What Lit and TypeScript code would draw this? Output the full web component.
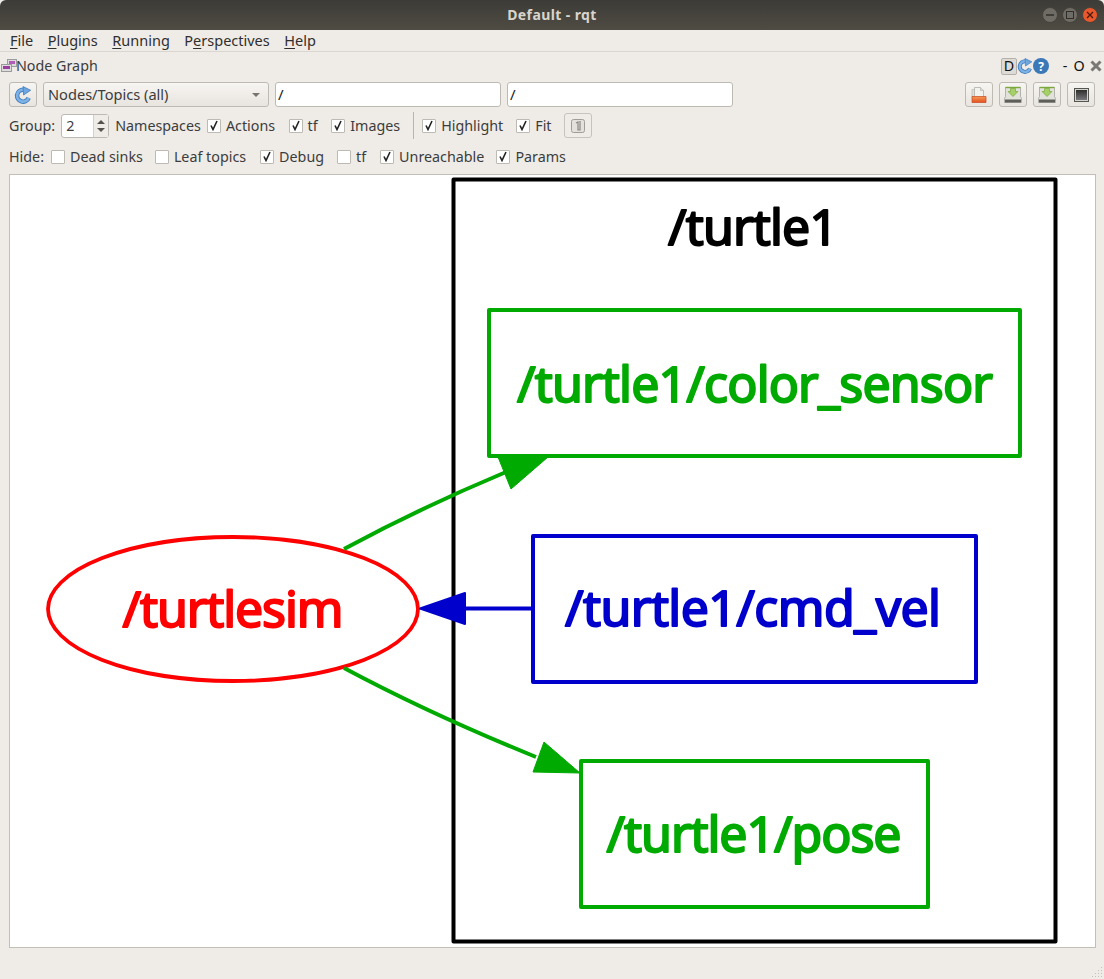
import { css, html, LitElement, svg } from "lit";
import { customElement } from "lit/decorators.js";

const GREEN = "#00aa00";
const BLUE = "#0000cc";

const refreshIcon = (size: number) => html`
    <svg width="${size}" height="${size}" viewBox="0 0 16 16">
        <path d="M13 10.500A5.300 5.300 0 1 1 8.500 3.300" fill="none" stroke="#3d7cc0" stroke-width="4" />
        <path d="M13 10.500A5.300 5.300 0 1 1 8.500 3.300" fill="none" stroke="#7fb2e4" stroke-width="2.400" />
        <path d="M8 .5 14.800 3.800 8.500 8z" fill="#6ea6dd" stroke="#3d7cc0" stroke-width="0.700" stroke-linejoin="round" />
    </svg>
`;

const diskIcon = html`
    <svg width="18" height="17" viewBox="0 0 18 17">
        <path d="M1.500 1.500h15v9l1 2v4H.5v-4l1-2z" fill="#e2e2dc" stroke="#a4a59f" stroke-width="0.800" />
        <path d="M1.500 1.500h15" stroke="#7aa83a" stroke-width="1.400" />
        <path d="M6.500 2.500h5v3h2.500l-5 5-5-5h2.500z" fill="#a6d168" stroke="#7aa83a" stroke-width="0.700" />
        <path d="M1 13.500h16v3H1z" fill="#5f5f59" />
    </svg>
`;

const folderIcon = html`
    <svg width="16" height="16" viewBox="0 0 16 16">
        <defs>
            <linearGradient id="fold" x1="0" y1="0" x2="0" y2="1">
                <stop offset="0" stop-color="#f59a55" />
                <stop offset="1" stop-color="#e2501f" />
            </linearGradient>
        </defs>
        <path d="M3.500 .5h6l3 3v7h-9z" fill="#f2f2ee" stroke="#b0b0aa" stroke-width="0.800" />
        <path d="M9.500 .5v3h3" fill="#dcdcd6" stroke="#b0b0aa" stroke-width="0.600" />
        <path d="M1 2.500h2.500v8H1z" fill="#e0e0da" stroke="#b0b0aa" stroke-width="0.600" />
        <path d="M1 9.500h14v6H1z" fill="url(#fold)" stroke="#c4481f" stroke-width="0.700" />
    </svg>
`;

const screenIcon = html`
    <svg width="15" height="14" viewBox="0 0 15 14">
        <defs>
            <linearGradient id="scr" x1="0" y1="0" x2="0" y2="1">
                <stop offset="0" stop-color="#2e2e2c" />
                <stop offset="1" stop-color="#77777a" />
            </linearGradient>
        </defs>
        <rect x=".5" y=".5" width="14" height="13" fill="#d4d4d0" stroke="#55554f" />
        <rect x="2" y="2" width="11" height="10" fill="url(#scr)" />
    </svg>
`;

const nodeGraphIcon = html`
    <svg class="graph-icon" width="16" height="16" viewBox="0 0 16 16">
        <rect x="6.500" y="1.500" width="9" height="7" fill="#dcdcdc" stroke="#9c9c9c" />
        <rect x="8" y="3" width="6" height="3" fill="#b45ab8" />
        <rect x=".5" y="6.500" width="10" height="7" fill="#dcdcdc" stroke="#9c9c9c" />
        <rect x="2" y="8" width="7" height="3" fill="#9a3fa0" />
    </svg>
`;

@customElement("app-root")
export class AppRoot extends LitElement {
    static override styles = css`
        :host {
            display: block;
            width: 1104px;
            height: 979px;
            overflow: hidden;
            background: #efebe7;
            color: #3c3c3c;
            font-family: "Noto Sans", "Open Sans", sans-serif;
            font-size: 14.3px;
        }

        .titlebar {
            position: relative;
            height: 30px;
            display: flex;
            align-items: center;
            justify-content: center;
            border-radius: 6px 6px 0 0;
            background: linear-gradient(#3c3b37, #4f4c43);
            color: #d8d4cc;
            font-size: 14px;
            font-weight: 700;
            letter-spacing: 0.4px;
            padding-bottom: 1px;
            box-sizing: border-box;
        }

        .winbtns {
            position: absolute;
            right: 6px;
            top: 7px;
            display: flex;
            gap: 4px;
        }

        .winbtn {
            box-sizing: border-box;
            width: 16px;
            height: 16px;
            border-radius: 50%;
            background: #6e6c64;
            border: 1px solid #45433c;
            display: grid;
            place-items: center;
        }

        .winbtn.close {
            background: #e9582c;
        }

        .menubar {
            box-sizing: content-box;
            height: 20px;
            display: flex;
            align-items: center;
            gap: 14.500px;
            padding: 0 0 1px 10px;
            border-bottom: 1px solid #d9d5d0;
            color: #2f2f2f;
            font-size: 14.500px;
        }

        .menubar u {
            text-underline-offset: 2px;
        }

        .dock-title {
            box-sizing: border-box;
            height: 28px;
            display: flex;
            align-items: center;
            padding: 0 2px 0 1px;
        }

        .dock-title > span {
            flex: 1;
            padding-bottom: 2px;
        }

        .graph-icon {
            margin: 0 -1px 0 0;
        }

        .dock-btns {
            display: flex;
            align-items: center;
            color: #111;
        }

        .d-btn {
            box-sizing: border-box;
            width: 16px;
            height: 17px;
            border: 1px solid #b4b0aa;
            background: #dedad5;
            border-radius: 2px;
            display: grid;
            place-items: center;
            line-height: 1;
        }

        .help {
            width: 16px;
            height: 16px;
            border-radius: 50%;
            background: #3a78b8;
            color: #fff;
            font-size: 12px;
            font-weight: 700;
            display: grid;
            place-items: center;
            margin-right: 9px;
        }

        .dock-letter {
            width: 14px;
            text-align: center;
            line-height: 1;
        }

        .dock-x {
            margin-left: 4px;
        }

        .row {
            display: flex;
            align-items: center;
            padding-left: 9px;
        }

        .row-tools {
            height: 25px;
            margin-top: 2px;
            padding-right: 9px;
            gap: 6px;
        }

        .row-group {
            height: 27px;
            margin-top: 5px;
        }

        .row-hide {
            height: 23px;
            margin-top: 6px;
        }

        .tool {
            box-sizing: border-box;
            width: 28px;
            height: 25px;
            border: 1px solid #bdb9b3;
            border-radius: 3px;
            background: linear-gradient(#f7f5f2, #e8e4df);
            display: grid;
            place-items: center;
        }

        .combo {
            box-sizing: border-box;
            width: 226px;
            height: 25px;
            border: 1px solid #bdb9b3;
            border-radius: 3px;
            background: linear-gradient(#f7f5f2, #e8e4df);
            display: flex;
            align-items: center;
            justify-content: space-between;
            padding: 0 8px 2px 4px;
            font-size: 14.600px;
        }

        .caret {
            width: 0;
            height: 0;
            margin-top: 2px;
            border: 4px solid transparent;
            border-top: 4px solid #77746f;
            border-bottom: 0;
        }

        .field {
            box-sizing: border-box;
            width: 226px;
            height: 25px;
            border: 1px solid #bdb9b3;
            border-radius: 3px;
            background: #fff;
            padding: 1px 0 0 2px;
            font-size: 15px;
            color: #1c1c1c;
        }

        .spacer {
            flex: 1;
        }

        .right-tools {
            display: flex;
            gap: 6px;
        }

        .spin {
            box-sizing: border-box;
            width: 48px;
            height: 24px;
            margin: 0 6px;
            border: 1px solid #bdb9b3;
            border-radius: 3px;
            background: #fff;
            display: flex;
            justify-content: space-between;
            padding-left: 4px;
            line-height: 22px;
        }

        .spin-arrows {
            width: 14px;
            border-left: 1px solid #d4d0cb;
            background: #efebe7;
            display: flex;
            flex-direction: column;
            align-items: center;
            justify-content: center;
            gap: 4px;
        }

        .up {
            border: 4px solid transparent;
            border-top: 0;
            border-bottom: 4px solid #55524e;
        }

        .down {
            border: 4px solid transparent;
            border-bottom: 0;
            border-top: 4px solid #55524e;
        }

        .namespaces {
            margin-right: 6px;
        }

        .hide-label {
            margin-right: 7px;
        }

        .check {
            display: inline-flex;
            align-items: center;
        }

        .box {
            box-sizing: border-box;
            width: 14px;
            height: 14px;
            border: 1px solid #bdb9b3;
            border-radius: 1px;
            background: #fff;
            margin-right: 5px;
            display: grid;
            place-items: center;
        }

        .divider {
            width: 1px;
            height: 27px;
            margin-right: 8px;
            background: #b8b4ae;
        }

        .small-btn {
            box-sizing: border-box;
            width: 28px;
            height: 25px;
            border: 1px solid #c6c2bc;
            border-radius: 3px;
            display: grid;
            place-items: center;
        }

        .canvas {
            box-sizing: border-box;
            width: 1087px;
            height: 774px;
            margin: 6px 0 0 9px;
            border: 1px solid #c2beb8;
            background: #fff;
        }

        .canvas svg {
            display: block;
        }

        .canvas text {
            font-family: "Noto Sans", sans-serif;
            font-size: 50px;
            text-anchor: middle;
            stroke-width: 2px;
            stroke-linejoin: round;
        }

        .grip {
            position: absolute;
            left: 1092px;
            top: 966px;
        }
    `;

    private checkbox(label: string, checked: boolean, gap: number) {
        return html`
            <span class="check" style="margin-right:${gap}px">
                <span class="box">
                    ${checked
                        ? html`<svg width="10" height="11" viewBox="0 0 10 11"><path d="M2 5.500 4 9.500 8 1" fill="none" stroke="#222" stroke-width="1.600" /></svg>`
                        : ""}
                </span>
                ${label}
            </span>
        `;
    }

    private graph() {
        return svg`
            <rect x="453.500" y="179.500" width="602" height="762" fill="none" stroke="#000" stroke-width="4" stroke-linejoin="round" />
            <text x="753" y="245" fill="#000" stroke="#000" textLength="170">/turtle1</text>

            <rect x="489" y="310" width="531" height="146" fill="#fff" stroke="${GREEN}" stroke-width="4" stroke-linejoin="round" />
            <text x="755" y="402" fill="${GREEN}" stroke="${GREEN}" textLength="476">/turtle1/color_sensor</text>

            <rect x="533" y="536" width="443" height="146" fill="#fff" stroke="${BLUE}" stroke-width="4" stroke-linejoin="round" />
            <text x="753" y="626" fill="${BLUE}" stroke="${BLUE}" textLength="376">/turtle1/cmd_vel</text>

            <rect x="581" y="761" width="347" height="146" fill="#fff" stroke="${GREEN}" stroke-width="4" stroke-linejoin="round" />
            <text x="754" y="852" fill="${GREEN}" stroke="${GREEN}" textLength="295">/turtle1/pose</text>

            <ellipse cx="233" cy="609" rx="185" ry="72" fill="none" stroke="#ff0000" stroke-width="3.800" />
            <text x="233" y="627" fill="#ff0000" stroke="#ff0000" textLength="221">/turtlesim</text>

            <path d="M344 549Q420 508 506 472" fill="none" stroke="${GREEN}" stroke-width="4" />
            <path d="M548 457 498 457 511 489z" fill="${GREEN}" stroke="${GREEN}" stroke-width="1" stroke-linejoin="round" />

            <path d="M344 668Q430 714 536 757" fill="none" stroke="${GREEN}" stroke-width="4" />
            <path d="M580 773 544 742 533 772z" fill="${GREEN}" stroke="${GREEN}" stroke-width="1" stroke-linejoin="round" />

            <path d="M533 608.500H465" fill="none" stroke="${BLUE}" stroke-width="4" />
            <path d="M420 608.500 465 593 465 624z" fill="${BLUE}" stroke="${BLUE}" stroke-width="2" stroke-linejoin="round" />
        `;
    }

    override render() {
        return html`
            <div class="titlebar">
                Default - rqt
                <div class="winbtns">
                    <span class="winbtn"><svg width="8" height="8"><path d="M0 4h8" stroke="#2f2e2a" stroke-width="1.500" /></svg></span>
                    <span class="winbtn"><svg width="8" height="8"><rect x=".5" y=".5" width="7" height="7" fill="none" stroke="#2f2e2a" /></svg></span>
                    <span class="winbtn close"><svg width="8" height="8"><path d="M1 1l6 6M7 1l-6 6" stroke="#4a1a08" stroke-width="1.300" /></svg></span>
                </div>
            </div>

            <div class="menubar">
                <span><u>F</u>ile</span>
                <span><u>P</u>lugins</span>
                <span><u>R</u>unning</span>
                <span>P<u>e</u>rspectives</span>
                <span><u>H</u>elp</span>
            </div>

            <div class="dock-title">
                ${nodeGraphIcon}
                <span>Node Graph</span>
                <div class="dock-btns">
                    <span class="d-btn">D</span>
                    ${refreshIcon(16)}
                    <span class="help">?</span>
                    <span class="dock-letter">-</span>
                    <span class="dock-letter">O</span>
                    <svg class="dock-x" width="12" height="12" viewBox="0 0 12 12"><path d="M1.500 1.500l9 9M10.500 1.500l-9 9" stroke="#7a7874" stroke-width="3" /></svg>
                </div>
            </div>

            <div class="row row-tools">
                <span class="tool">${refreshIcon(18)}</span>
                <span class="combo">Nodes/Topics (all)<span class="caret"></span></span>
                <span class="field">/</span>
                <span class="field">/</span>
                <span class="spacer"></span>
                <div class="right-tools">
                    <span class="tool">${folderIcon}</span>
                    <span class="tool">${diskIcon}</span>
                    <span class="tool">${diskIcon}</span>
                    <span class="tool">${screenIcon}</span>
                </div>
            </div>

            <div class="row row-group">
                Group:
                <span class="spin">2<span class="spin-arrows"><span class="up"></span><span class="down"></span></span></span>
                <span class="namespaces">Namespaces</span>
                ${this.checkbox("Actions", true, 13.5)}
                ${this.checkbox("tf", true, 13.5)}
                ${this.checkbox("Images", true, 13)}
                <span class="divider"></span>
                ${this.checkbox("Highlight", true, 13)}
                ${this.checkbox("Fit", true, 12)}
                <span class="small-btn">
                    <svg width="16" height="16" viewBox="0 0 16 16"><rect x="1.500" y="1.500" width="13" height="13" rx="2" fill="#e4e0db" stroke="#a09d98" /><path d="M6 5l2-1v8h2V3" fill="none" stroke="#8a8782" stroke-width="1.200" /></svg>
                </span>
            </div>

            <div class="row row-hide">
                <span class="hide-label">Hide:</span>
                ${this.checkbox("Dead sinks", false, 12)}
                ${this.checkbox("Leaf topics", false, 14)}
                ${this.checkbox("Debug", true, 13)}
                ${this.checkbox("tf", false, 14)}
                ${this.checkbox("Unreachable", true, 12)}
                ${this.checkbox("Params", true, 0)}
            </div>

            <div class="canvas">
                <svg width="1085" height="772" viewBox="10 175 1085 772">${this.graph()}</svg>
            </div>

            <svg class="grip" width="12" height="12" viewBox="0 0 12 12" fill="#c4c0ba">
                <rect x="9" y="1" width="1" height="1" /><rect x="6" y="4" width="1" height="1" /><rect x="9" y="4" width="1" height="1" />
                <rect x="3" y="7" width="1" height="1" /><rect x="6" y="7" width="1" height="1" /><rect x="9" y="7" width="1" height="1" />
                <rect x="0" y="10" width="1" height="1" /><rect x="3" y="10" width="1" height="1" /><rect x="6" y="10" width="1" height="1" /><rect x="9" y="10" width="1" height="1" />
            </svg>
        `;
    }
}
